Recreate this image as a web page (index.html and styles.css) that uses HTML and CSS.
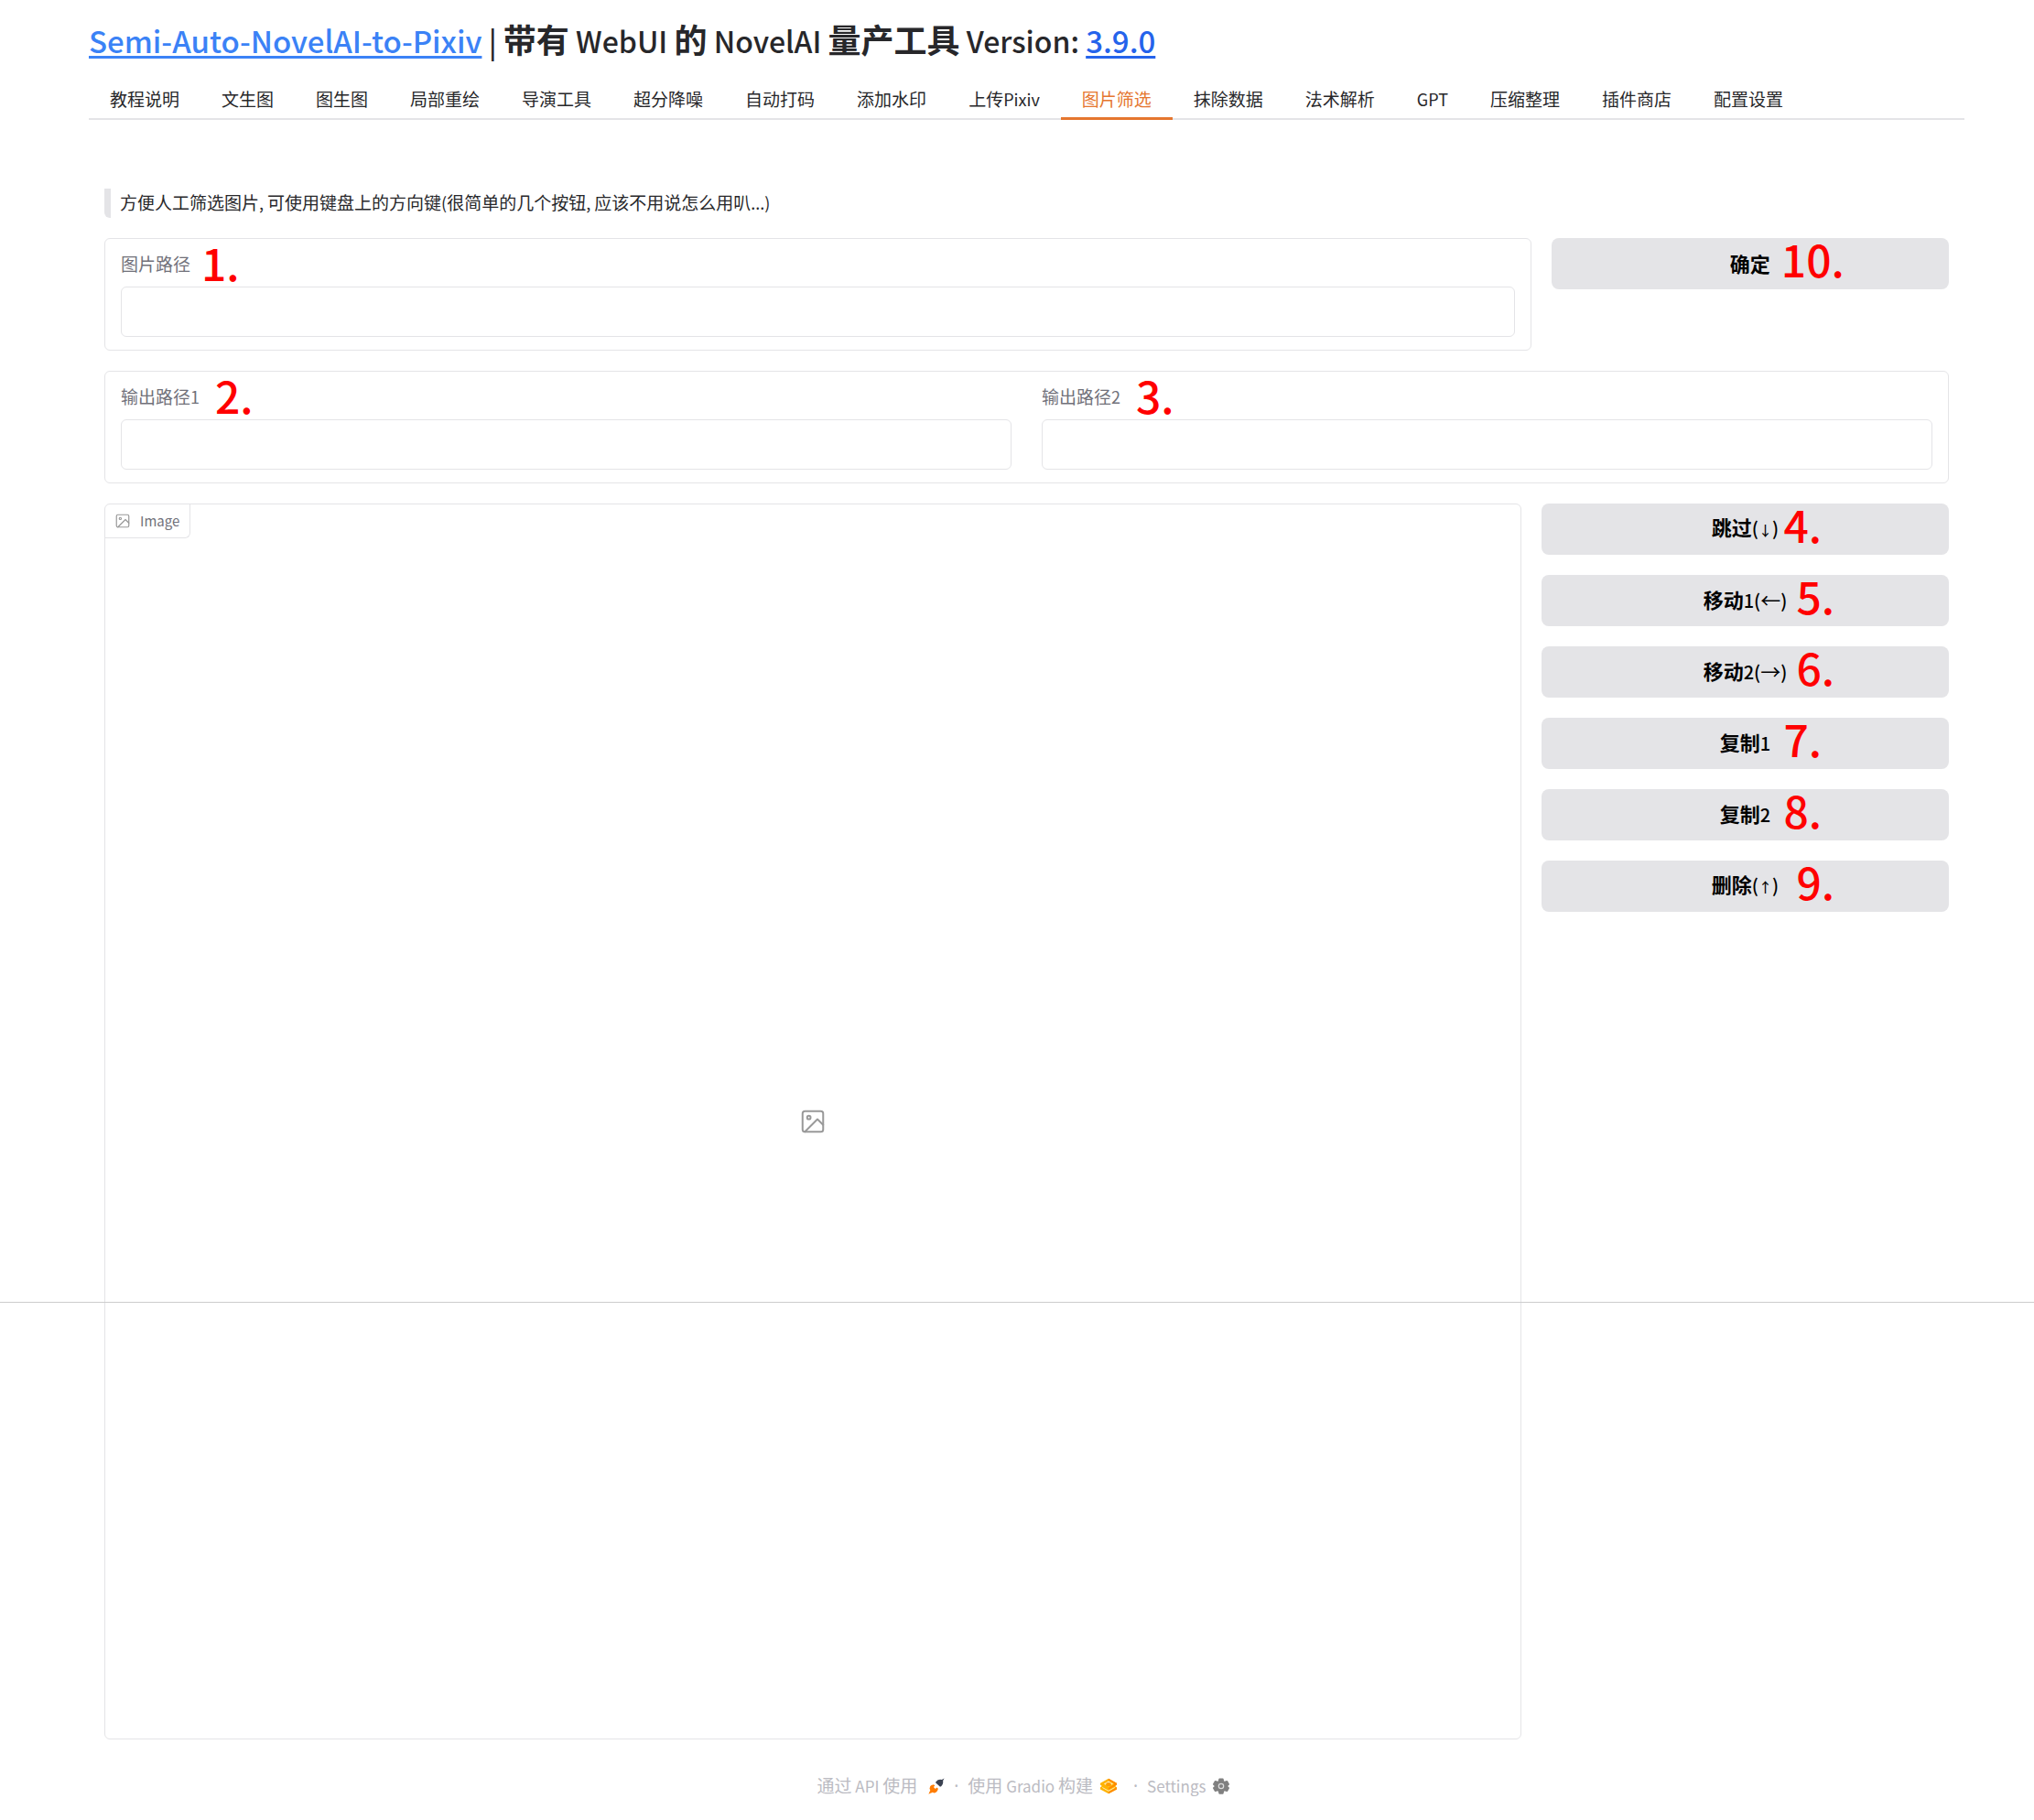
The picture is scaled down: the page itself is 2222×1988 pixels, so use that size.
FILE: index.html
```html
<!DOCTYPE html>
<html lang="zh-CN">
<head>
<meta charset="utf-8">
<meta name="viewport" content="width=device-width, initial-scale=1">
<title>Semi-Auto-NovelAI-to-Pixiv</title>
<link rel="stylesheet" href="styles.css">
</head>
<body>
<svg class="defs" width="0" height="0" aria-hidden="true">
  <symbol id="icon-image" viewBox="0 0 24 24" fill="none" stroke="currentColor" stroke-width="1.6" stroke-linecap="round" stroke-linejoin="round">
    <rect x="3" y="3" width="18" height="18" rx="2"/>
    <circle cx="8.5" cy="8.5" r="1.5"/>
    <polyline points="21 15 16 10 5 21"/>
  </symbol>
</svg>
<div class="page">
  <main class="app">
    <h1 class="title"><a class="title-link" href="#repo"><span class="latin">Semi-Auto-NovelAI-to-Pixiv</span></a><span class="latin"> | </span>带有<span class="latin"> WebUI </span>的<span class="latin"> NovelAI </span>量产工具<span class="latin"> Version: </span><a class="version-link" href="#release"><span class="latin">3.9.0</span></a></h1>

    <nav class="tabs" role="tablist">
      <button class="tab" role="tab">教程说明</button>
      <button class="tab" role="tab">文生图</button>
      <button class="tab" role="tab">图生图</button>
      <button class="tab" role="tab">局部重绘</button>
      <button class="tab" role="tab">导演工具</button>
      <button class="tab" role="tab">超分降噪</button>
      <button class="tab" role="tab">自动打码</button>
      <button class="tab" role="tab">添加水印</button>
      <button class="tab" role="tab">上传<span class="latin">Pixiv</span></button>
      <button class="tab tab-active" role="tab" aria-selected="true">图片筛选</button>
      <button class="tab" role="tab">抹除数据</button>
      <button class="tab" role="tab">法术解析</button>
      <button class="tab" role="tab"><span class="latin">GPT</span></button>
      <button class="tab" role="tab">压缩整理</button>
      <button class="tab" role="tab">插件商店</button>
      <button class="tab" role="tab">配置设置</button>
    </nav>

    <section class="panel">
      <blockquote class="note">方便人工筛选图片<span class="latin">, </span>可使用键盘上的方向键<span class="latin">(</span>很简单的几个按钮<span class="latin">, </span>应该不用说怎么用叭<span class="latin">...)</span></blockquote>

      <div class="row row-source">
        <div class="block">
          <div class="field">
            <label for="source">图片路径</label>
            <input id="source" type="text">
            <span class="mark mark-source">1.</span>
          </div>
        </div>
        <div class="action">
          <button class="btn">确定</button>
          <span class="mark mark-near">10.</span>
        </div>
      </div>

      <div class="block block-pair">
        <div class="field">
          <label for="out1">输出路径<span class="latin">1</span></label>
          <input id="out1" type="text">
          <span class="mark mark-output">2.</span>
        </div>
        <div class="field">
          <label for="out2">输出路径<span class="latin">2</span></label>
          <input id="out2" type="text">
          <span class="mark mark-output">3.</span>
        </div>
      </div>

      <div class="row row-viewer">
        <div class="viewer">
          <div class="viewer-label"><svg class="icon-small"><use href="#icon-image"/></svg>Image</div>
          <svg class="icon-large"><use href="#icon-image"/></svg>
        </div>
        <div class="actions">
          <div class="action"><button class="btn">跳过<span class="latin">(<span class="arrow-short">↓</span>)</span></button><span class="mark mark-mid">4.</span></div>
          <div class="action"><button class="btn">移动<span class="latin">1(</span><span class="arrow">←</span><span class="latin">)</span></button><span class="mark mark-far">5.</span></div>
          <div class="action"><button class="btn">移动<span class="latin">2(</span><span class="arrow">→</span><span class="latin">)</span></button><span class="mark mark-far">6.</span></div>
          <div class="action"><button class="btn">复制<span class="latin">1</span></button><span class="mark mark-mid">7.</span></div>
          <div class="action"><button class="btn">复制<span class="latin">2</span></button><span class="mark mark-mid">8.</span></div>
          <div class="action"><button class="btn">删除<span class="latin">(<span class="arrow-short">↑</span>)</span></button><span class="mark mark-far">9.</span></div>
        </div>
      </div>
    </section>
  </main>

  <footer class="footer">
    <a class="footer-link" href="#api">
      <span>通过<span class="latin"> API </span>使用</span>
      <svg class="footer-icon rocket" viewBox="0 0 24 24">
        <path fill="#3b4252" d="M23.500.5 21.500 4Q22.500 9 18.500 12.500L17 12.800 10.800 7 11.200 5.500Q15 1.500 19.800 2.800Z"/>
        <path fill="#ff7c00" d="M8 9.500Q2.500 10 2 15.500L3 18 .5 23.500 6.500 21 8.500 22Q13.500 21 14.500 15.500L12.500 14 10.500 16 7.800 13.300 9.800 11.300Z"/>
      </svg>
    </a>
    <span class="dot">·</span>
    <a class="footer-link built" href="#gradio">
      <span>使用<span class="latin"> Gradio </span>构建</span>
      <svg class="footer-icon" viewBox="0 0 24 24">
        <path fill="#ffb300" d="M12 1 24 7.500V10L21.500 12 24 13.800V16.500L12 23 0 16.500V13.800L2.500 12 0 10V7.500Z"/>
        <path fill="#ff8a00" d="M12 1 24 7.500V10L21 12 12 17V14.500L20 9.500V8L12 3.800ZM24 13.800V16.500L12 23V20.500Z"/>
        <path fill="#fff" d="M12 4.800 18.800 8.500 12 12.500 5.200 8.500ZM3.500 13.500 12 18.200 20.500 13.500 21.500 14.200 12 19.600 2.500 14.200Z" opacity=".75"/>
        <ellipse cx="12" cy="9.500" rx="3.800" ry="2.800" fill="#ff9d00"/>
      </svg>
    </a>
    <span class="dot">·</span>
    <button class="footer-link"><span class="latin">Settings</span>
      <svg class="footer-icon" viewBox="0 0 24 24">
        <path fill="#808080" stroke="#808080" stroke-width="2" stroke-linejoin="round" d="M9.500 1.500h5l.8 3.600 1.700 1 3.500-1.100 2.500 4.300-2.700 2.500v.4l2.700 2.500-2.500 4.300-3.500-1.100-1.700 1-.8 3.600h-5l-.8-3.600-1.700-1L3.500 19 1 14.700l2.700-2.500v-.4L1 9.300 3.500 5 7 6.100l1.700-1Z"/>
        <circle cx="12" cy="12" r="3.600" fill="none" stroke="#ddd" stroke-width="1.600"/>
      </svg>
    </button>
  </footer>
  <div class="fold"></div>
</div>
</body>
</html>
```
FILE: styles.css
```css
* { box-sizing: border-box; }

body {
  margin: 0;
  background: #fff;
  color: #27272a;
  font-family: "Noto Sans CJK SC", "Noto Sans", sans-serif;
  font-size: 19px;
  line-height: 28px;
}

button { font: inherit; color: inherit; border: 0; background: none; padding: 0; }

.defs { position: absolute; }

.latin { font-size: 18px; }

.page { position: relative; }

.app { padding: 16px 76px 0 97px; }

.title {
  margin: 0;
  font-size: 36px;
  line-height: 52px;
  font-weight: 700;
}
.title .latin { font-size: 32px; font-weight: 500; white-space: pre-wrap; }
.title a .latin { font-size: 33px; }
.title a { text-decoration-thickness: 3px; text-underline-offset: 3px; }
.title-link { color: #3b82f6; }
.version-link { color: #2563eb; }

.tabs {
  display: flex;
  margin-top: 16px;
  height: 45px;
  box-shadow: inset 0 -2px #e4e4e7;
}
.tab { padding: 0 23px 2px; white-space: nowrap; }
.tab-active { color: #e5762f; box-shadow: inset 0 -3px #e5762f; }

.panel {
  display: flex;
  flex-direction: column;
  gap: 22px;
  padding: 75px 17px 0;
}

.note {
  margin: 0;
  padding: 0 10px 2px;
  border-left: 7px solid #e4e4e7;
  border-radius: 0 0 0 6px;
  line-height: 30px;
}

.row { display: grid; gap: 22px; align-items: start; }
.row-source { grid-template-columns: 61fr 17fr; }
.row-viewer { grid-template-columns: 80fr 23fr; }

.block {
  border: 1px solid #e4e4e7;
  border-radius: 6px;
  padding: 13px 17px 14px;
}
.block-pair { display: grid; grid-template-columns: 1fr 1fr; gap: 33px; }

.field { position: relative; display: flex; flex-direction: column; gap: 11px; }
.field label { color: #71717a; }
.field input {
  width: 100%;
  height: 55px;
  border: 1px solid #e4e4e7;
  border-radius: 6px;
  padding: 0 14px;
  font: inherit;
  background: #fff;
}

.actions { display: flex; flex-direction: column; gap: 22px; }
.action { position: relative; }
.btn {
  display: block;
  width: 100%;
  height: 56px;
  padding-bottom: 2px;
  border-radius: 8px;
  background: #e4e4e7;
  color: #000;
  font-size: 22px;
  font-weight: 700;
}
.btn .latin { font-size: 20px; font-weight: 500; }
.arrow { font-weight: 400; }
.btn .arrow-short { font-size: 15px; }

.mark {
  position: absolute;
  color: #f00;
  font-size: 48px;
  font-weight: 500;
  line-height: 56px;
  pointer-events: none;
}
.mark-source { left: 88px; top: -16px; }
.mark-output { left: 103px; top: -16px; }
.action .mark { top: -6px; }
.mark-near { left: calc(50% + 34px); }
.mark-mid { left: calc(50% + 42px); }
.mark-far { left: calc(50% + 56px); }

.viewer {
  position: relative;
  display: grid;
  place-items: center;
  min-height: 1350px;
  border: 1px solid #e4e4e7;
  border-radius: 6px;
  color: #999;
}
.viewer-label {
  position: absolute;
  top: 0;
  left: 0;
  display: flex;
  align-items: center;
  gap: 10px;
  padding: 4px 11px 4px 10px;
  border: solid #e4e4e7;
  border-width: 0 1px 1px 0;
  border-radius: 0 0 6px 0;
  color: #71717a;
  font-size: 15px;
}
.icon-small { width: 18px; height: 18px; color: #999; }
.icon-large { width: 30px; height: 30px; }

.footer {
  display: flex;
  justify-content: center;
  align-items: center;
  gap: 10px;
  padding: 36px 0 24px 14px;
  color: #bbbbc2;
}
.footer-link {
  display: flex;
  align-items: center;
  color: inherit;
  text-decoration: none;
  white-space: nowrap;
}
.footer .latin { font-size: 17px; }
.dot { font-family: "Noto Sans", sans-serif; }
.footer-icon { width: 18px; height: 18px; margin-left: 8px; }
.rocket { margin-left: 12px; }
.built { margin-right: 8px; }

.fold {
  position: absolute;
  top: 1422px;
  left: 0;
  right: 0;
  height: 1px;
  background: #ccc;
}
```
